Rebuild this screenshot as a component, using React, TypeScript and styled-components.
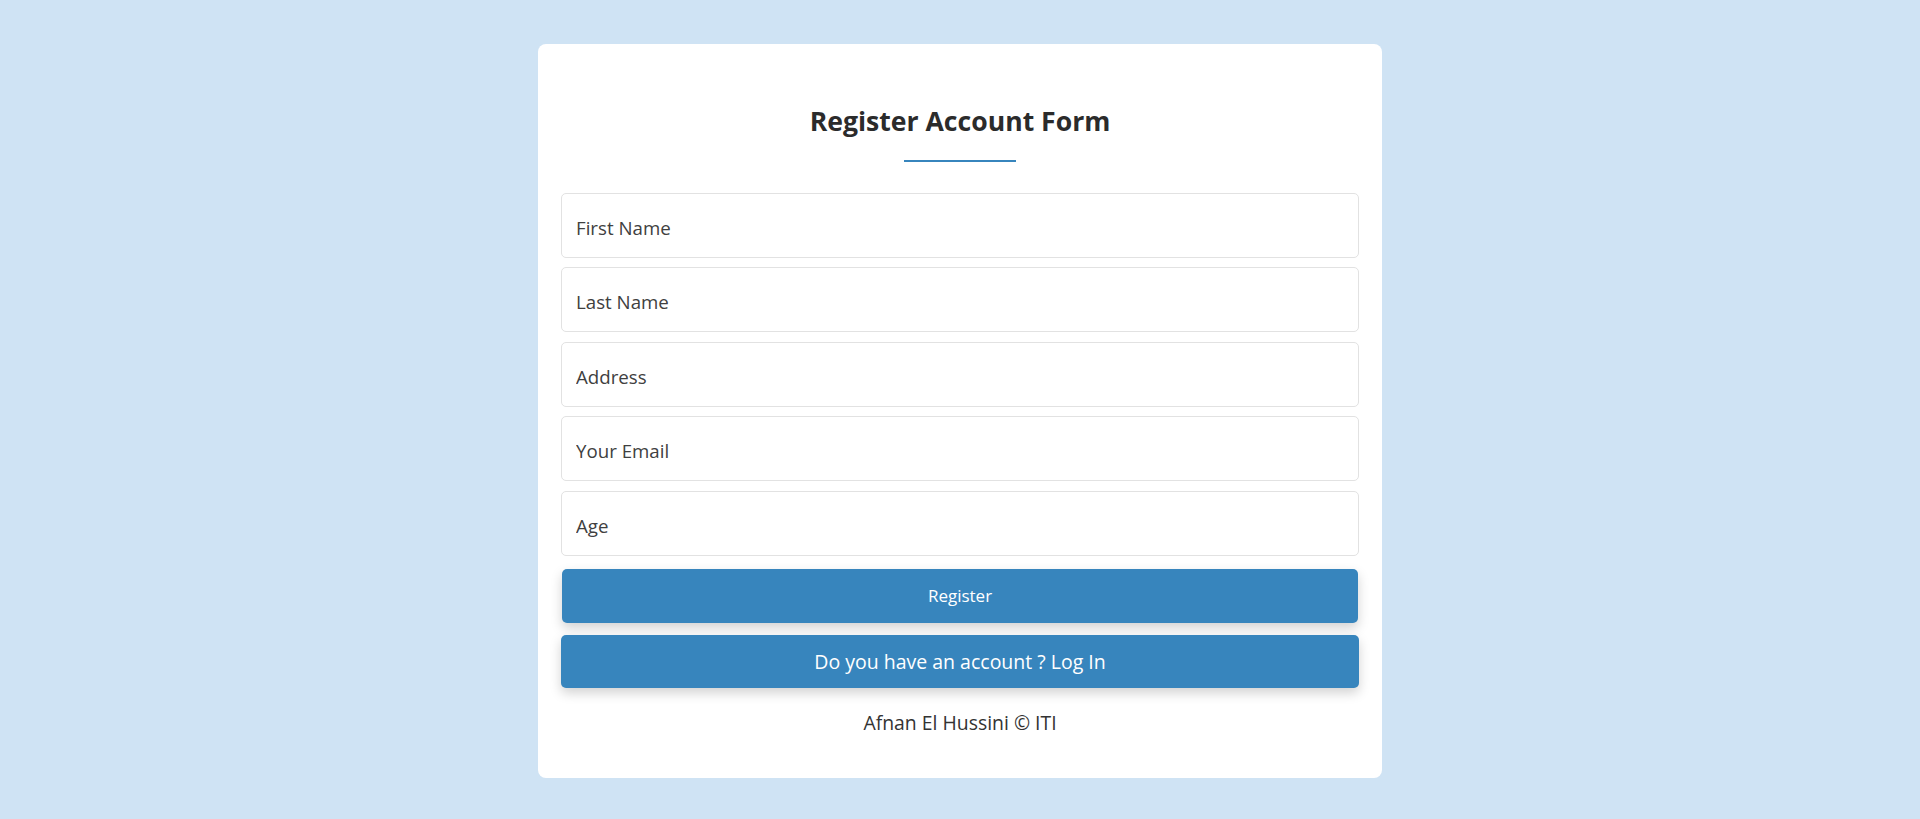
import React from 'react'
import styled, { createGlobalStyle } from 'styled-components'

const GlobalStyle = createGlobalStyle`
  * {
    box-sizing: border-box;
  }

  body {
    margin: 0;
    background: #cfe3f4;
    font-family: 'Open Sans', 'Noto Sans', sans-serif;
  }
`

export const Page = styled.div`
  min-height: 819px;
  display: flex;
  justify-content: center;
  align-items: flex-start;
  padding-top: 44px;
`

export const Card = styled.div`
  width: 844px;
  background: #ffffff;
  border-radius: 8px;
  padding: 60px 23px 43px;
  display: flex;
  flex-direction: column;
  align-items: center;
`

export const Title = styled.h2`
  margin: 0;
  font-size: 26.6px;
  line-height: 34px;
  font-weight: 700;
  color: #2b2b2b;
`

export const TitleLine = styled.div`
  width: 112px;
  height: 2px;
  background: #3785bd;
  margin-top: 22px;
  margin-bottom: 31px;
`

export const Form = styled.form`
  width: 100%;
  display: flex;
  flex-direction: column;
  gap: 9.4px;
`

export const Input = styled.input`
  width: 100%;
  height: 65px;
  border: 1px solid #e2e2e2;
  border-radius: 5px;
  padding: 4px 14px 0;
  font-family: inherit;
  font-size: 18.7px;
  color: #333;
  outline: none;

  &::placeholder {
    color: #404040;
    opacity: 1;
  }
`

export const Button = styled.button<{ $size: number; $top: number; $height: number }>`
  width: ${(p) => (p.$size > 18 ? '100%' : 'calc(100% - 2px)')};
  align-self: center;
  height: ${(p) => p.$height}px;
  margin-top: ${(p) => p.$top}px;
  border: none;
  border-radius: 5px;
  background: #3785bd;
  color: #ffffff;
  font-family: inherit;
  font-size: ${(p) => p.$size}px;
  cursor: pointer;
  box-shadow: 0 5px 12px rgba(0, 0, 0, 0.18);
`

export const Footer = styled.p`
  margin: 23px 0 0;
  line-height: 24px;
  font-size: 19.4px;
  color: #333;
`

const fields = ['First Name', 'Last Name', 'Address', 'Your Email', 'Age']

export default function App() {
  return (
    <>
      <GlobalStyle />
      <Page>
        <Card>
          <Title>Register Account Form</Title>
          <TitleLine />
          <Form onSubmit={(e) => e.preventDefault()}>
            {fields.map((f) => (
              <Input key={f} type="text" placeholder={f} />
            ))}
            <Button type="submit" $size={17} $top={3.6} $height={54}>
              Register
            </Button>
            <Button type="button" $size={19.5} $top={2.6} $height={53}>
              Do you have an account ? Log In
            </Button>
          </Form>
          <Footer>Afnan El Hussini © ITI</Footer>
        </Card>
      </Page>
    </>
  )
}
